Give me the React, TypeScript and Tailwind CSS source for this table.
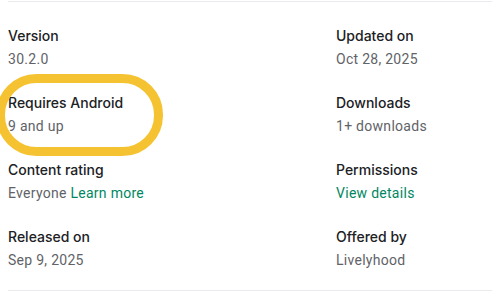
import React from 'react';

const ITEMS: { label: string; value: React.ReactNode }[] = [
  { label: 'Version', value: '30.2.0' },
  { label: 'Updated on', value: 'Oct 28, 2025' },
  { label: 'Requires Android', value: '9 and up' },
  { label: 'Downloads', value: '1+ downloads' },
  {
    label: 'Content rating',
    value: (
      <>
        Everyone <span className="text-[#01875f]">Learn more</span>
      </>
    ),
  },
  { label: 'Permissions', value: <span className="text-[#01875f]">View details</span> },
  { label: 'Released on', value: 'Sep 9, 2025' },
  { label: 'Offered by', value: 'Livelyhood' },
];

export default function App() {
  return (
    <div className="relative w-[492px] h-[291px] bg-white overflow-hidden font-['Roboto',sans-serif]">
      <div className="pt-[1px] pl-2">
        <div className="border-t border-b border-[#e8eaed] pt-6 pb-5">
          <div className="grid grid-cols-[328px_1fr] gap-y-6">
            {ITEMS.map((item) => (
              <div key={item.label} className="flex flex-col gap-[3px]">
                <span className="font-['Inter',sans-serif] text-[14px] leading-5 font-medium text-[#202124]">
                  {item.label}
                </span>
                <span className="text-[14px] leading-5 text-[#5f6368] tracking-[0.02em]">
                  {item.value}
                </span>
              </div>
            ))}
          </div>
        </div>
      </div>

      {/* highlight marker */}
      <svg
        className="absolute left-0 top-0 pointer-events-none"
        width="492"
        height="291"
        viewBox="0 0 492 291"
      >
        <rect
          x="0.5"
          y="78.5"
          width="158"
          height="73"
          rx="36"
          fill="none"
          stroke="#f5c332"
          strokeWidth="9"
        />
      </svg>
    </div>
  );
}
